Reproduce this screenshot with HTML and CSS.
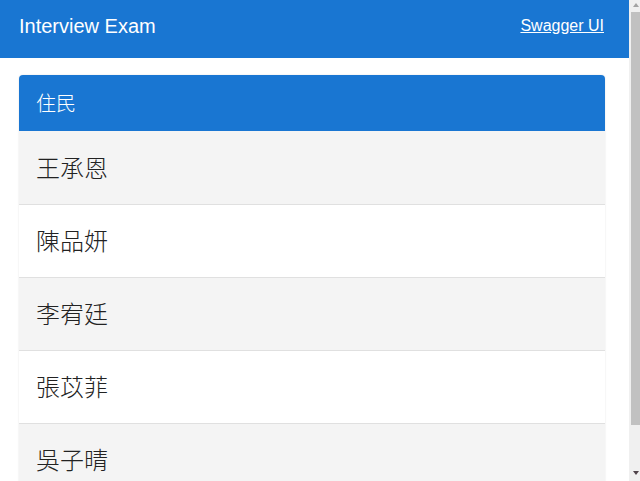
FILE: index.html
```html
<!DOCTYPE html>
<html lang="zh-Hant">
<head>
<meta charset="utf-8">
<title>Interview Exam</title>
<link rel="stylesheet" href="styles.css">
</head>
<body>
<div class="page">
  <header class="topbar">
    <span class="brand">Interview Exam</span>
    <a class="swagger" href="#">Swagger UI</a>
  </header>
  <main class="content">
    <section class="card">
      <div class="card-head">住民</div>
      <ul class="list">
        <li class="row">王承恩</li>
        <li class="row">陳品妍</li>
        <li class="row">李宥廷</li>
        <li class="row">張苡菲</li>
        <li class="row">吳子晴</li>
      </ul>
    </section>
  </main>
</div>
<div class="scrollbar" aria-hidden="true">
  <span class="arrow arrow-up"></span>
  <div class="track"><div class="thumb"></div></div>
  <span class="arrow arrow-down"></span>
</div>
</body>
</html>
```
FILE: styles.css
```css
html, body {
  margin: 0;
  padding: 0;
  height: 100%;
}
body {
  display: flex;
  overflow: hidden;
  font-family: "Liberation Sans", Arial, "Noto Sans CJK TC", sans-serif;
  color: #333;
  background: #fff;
}
.page {
  flex: 1;
  min-width: 0;
  overflow: hidden;
}
.topbar {
  height: 58px;
  background: #1976d2;
  color: #fff;
  display: flex;
  align-items: center;
  justify-content: space-between;
  padding: 0 25px 6px 19px;
  box-sizing: border-box;
}
.brand {
  font-size: 20px;
}
.swagger {
  color: #fff;
  font-size: 16px;
  text-decoration: underline;
}
.content {
  padding: 17px 24px 31px 19px;
}
.card {
  border-radius: 4px 4px 0 0;
  box-shadow: 0 0 2px rgba(0, 0, 0, 0.12);
  overflow: hidden;
}
.card-head {
  background: #1976d2;
  color: #fff;
  font-family: "Noto Sans CJK TC", sans-serif;
  font-weight: 300;
  font-size: 20px;
  line-height: 24px;
  padding: 16px 17px;
}
.list {
  list-style: none;
  margin: 0;
  padding: 0;
}
.row {
  font-family: "Noto Sans CJK TC", sans-serif;
  font-weight: 300;
  font-size: 24px;
  line-height: 36px;
  padding: 17px 17px 19px;
  border-bottom: 1px solid #e0e0e0;
  color: #222;
  background: #fff;
}
.row:first-child {
  padding-top: 18px;
}
.row:nth-child(odd) {
  background: #f4f4f4;
}
.scrollbar {
  width: 11px;
  flex: none;
  background: #f0f0f0;
  display: flex;
  flex-direction: column;
  align-items: flex-end;
}
.arrow {
  width: 0;
  height: 0;
  border-left: 3px solid transparent;
  border-right: 3px solid transparent;
  margin: 3px 1px 0 0;
}
.arrow-up {
  border-bottom: 4px solid #a3a3a3;
}
.arrow-down {
  border-top: 4px solid #50434a;
  margin: 0 1px 6px 0;
}
.track {
  flex: 1;
  width: 9px;
  padding-top: 5px;
}
.thumb {
  height: 413px;
  background: #c1c1c1;
}
```
